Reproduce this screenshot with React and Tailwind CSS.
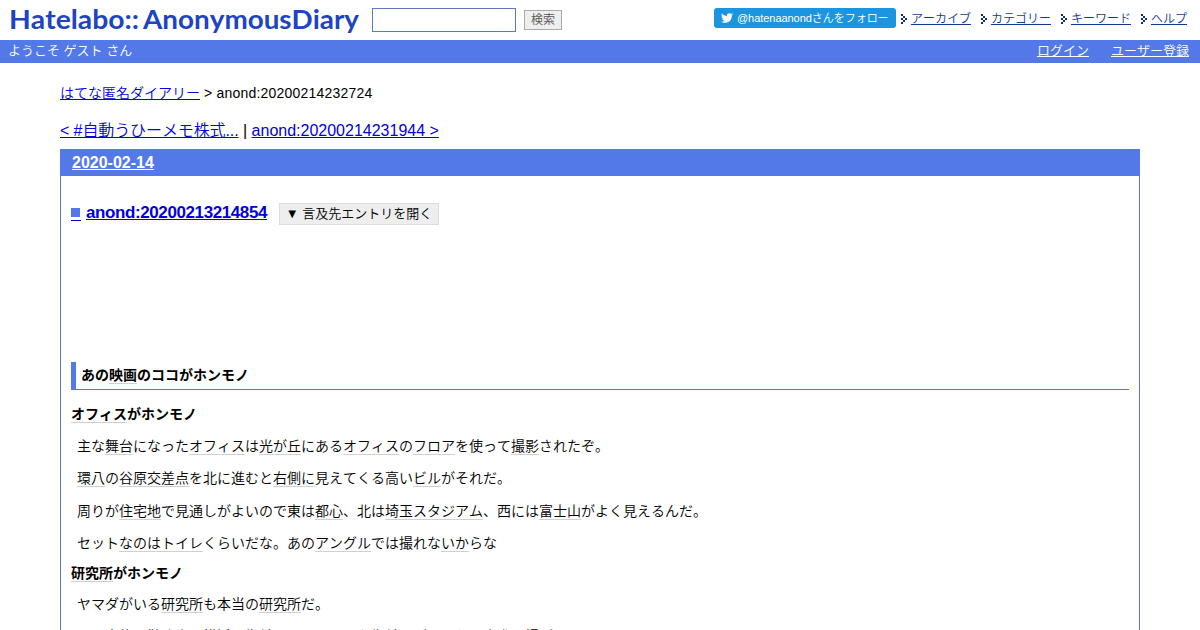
import { FaTwitter } from "react-icons/fa";

const menu = ["アーカイブ", "カテゴリー", "キーワード", "ヘルプ"];

const K = ({ children }) => (
  <span className="border-b border-[#d0d0d0]">{children}</span>
);

const Arrow = () => (
  <svg width="6" height="10" viewBox="0 0 6 10" fill="#0b2f7c" shapeRendering="crispEdges">
    <path d="M0 0h2v2h-2zM2 2h2v2h-2zM0 4h2v2h-2zM4 4h2v2h-2zM2 6h2v2h-2zM0 8h2v2h-2z" />
  </svg>
);

const Logo = () => (
  <svg
    width="350"
    height="40"
    className="block shrink-0"
    fill="#1d44c2"
    fontFamily="Lato"
    fontWeight="700"
    fontSize="26"
  >
    <text x="0" y="29" textLength="130" lengthAdjust="spacingAndGlyphs">
      Hatelabo::
    </text>
    <text x="134" y="29" textLength="216" lengthAdjust="spacingAndGlyphs">
      AnonymousDiary
    </text>
  </svg>
);

const Header = () => (
  <header>
    <div className="flex h-10 items-start pl-[9px] pr-[13px]">
      <Logo />
      <input
        type="text"
        className="ml-[13px] mt-2 h-6 w-36 border border-[#5c76c8] bg-white px-1 outline-none"
      />
      <button className="ml-2 mt-[10px] h-5 w-[38px] border border-[#aaa] bg-[#eee] text-xs leading-[17px] text-[#555]">
        検索
      </button>
      <a className="ml-auto mt-2 flex h-5 w-[182px] shrink-0 items-center rounded-[3px] bg-[#1b95e0] pl-[7px] text-[11px] text-white">
        <FaTwitter className="mr-1 size-3" />
        <span className="whitespace-nowrap tracking-[-0.04px]">@hatenaanondさんをフォロー</span>
      </a>
      <nav className="ml-[5px] mt-[9px] flex gap-[10px]">
        {menu.map((item) => (
          <span key={item} className="flex items-center gap-1 text-xs leading-[18px]">
            <Arrow />
            <a className="mt-px whitespace-nowrap text-[#0b3a92] underline" href="#">
              {item}
            </a>
          </span>
        ))}
      </nav>
    </div>
    <div className="flex h-[23px] justify-between bg-[#5279e7] pl-2 pr-[11px] text-[13px] leading-[22px] text-white">
      <span>ようこそ ゲスト さん</span>
      <span className="flex gap-[22px]">
        <a href="#" className="underline">ログイン</a>
        <a href="#" className="underline">ユーザー登録</a>
      </span>
    </div>
  </header>
);

const Section = () => (
  <div className="px-[10px] text-sm leading-5">
    <h4 className="h-7 border-b border-l-[5px] border-b-[#5c76c8] border-l-[#5279e7] pl-[5px] font-bold leading-[27px]">
      あの<K>映画</K>のココがホンモノ
    </h4>
    <h5 className="mt-[14px] font-bold">
      <K>オフィス</K>がホンモノ
    </h5>
    <div className="mt-3 flex flex-col gap-3 pl-[6px]">
      <p>
        主な<K>舞台</K>になった<K>オフィス</K>は<K>光が丘</K>にある<K>オフィス</K>の<K>フロア</K>を使って<K>撮影</K>されたぞ。
      </p>
      <p>
        <K>環八</K>の<K>谷原交差点</K>を北に進むと<K>右側に</K>見えてくる高い<K>ビル</K>がそれだ。
      </p>
      <p className="mt-px">
        周りが<K>住宅地</K>で見通しがよいので東は<K>都心</K>、北は<K>埼玉スタジアム</K>、西には<K>富士山</K>がよく見えるんだ。
      </p>
      <p>
        セット<K>なのは</K><K>トイレ</K>くらいだな。あの<K>アングル</K>では撮れな<K>いか</K>らな
      </p>
    </div>
    <h5 className="mt-[10px] font-bold">
      <K>研究所</K>がホンモノ
    </h5>
    <div className="mt-[11px] flex flex-col gap-3 pl-[6px]">
      <p>
        ヤマダがいる<K>研究所</K>も本当の<K>研究所</K>だ。
      </p>
      <p>
        その家族の<K>勤務先</K>の<K>横浜</K>の<K>街並</K>みはよくできた<K>街並</K>だが、これも<K>実際</K>の場所だ。
      </p>
    </div>
  </div>
);

export default function App() {
  return (
    <div className="h-[630px] overflow-hidden bg-white font-['Liberation_Sans','Noto_Sans_CJK_JP',sans-serif] font-[350] text-black [font-kerning:none]">
      <Header />
      <main className="px-[60px]">
        <div className="mt-5 text-sm leading-5">
          <a href="#" className="text-[#0000dd] underline">はてな匿名ダイアリー</a>
          <span className="tracking-[0.2px]">{" > anond:20200214232724"}</span>
        </div>
        <div className="mt-4 text-base leading-6">
          <a href="#" className="tracking-[-0.1px] text-[#0000dd] underline">&lt; #自動うひーメモ株式...</a>
          {" | "}
          <a href="#" className="text-[#0000dd] underline">anond:20200214231944 &gt;</a>
        </div>
        <div className="mt-[6px] border-x border-[#5c76c8]">
          <h2 className="-mx-px h-[27px] bg-[#5279e7] pl-3 text-base font-bold leading-[27px] text-white">
            <a href="#" className="underline">2020-02-14</a>
          </h2>
          <h3 className="mt-[27px] flex h-[22px] items-center pl-[10px] text-[17px] font-bold leading-5 text-[#0000dd]">
            <a href="#" className="-mt-px mr-[5px] flex h-[15px] w-[10px] flex-col justify-between border-b border-[#0000dd]">
              <span className="mt-[2px] size-[9px] bg-[#5279e7]" />
            </a>
            <a href="#" className="-mt-[2px] w-[181px] whitespace-nowrap tracking-[-0.4px] underline">anond:20200213214854</a>
            <button className="ml-3 h-[22px] w-40 border border-[#ddd] bg-[#eee] text-[13px] font-[350] leading-5 text-black">
              ▼ 言及先エントリを開く
            </button>
          </h3>
          <div className="h-[137px]" />
          <Section />
        </div>
      </main>
    </div>
  );
}
